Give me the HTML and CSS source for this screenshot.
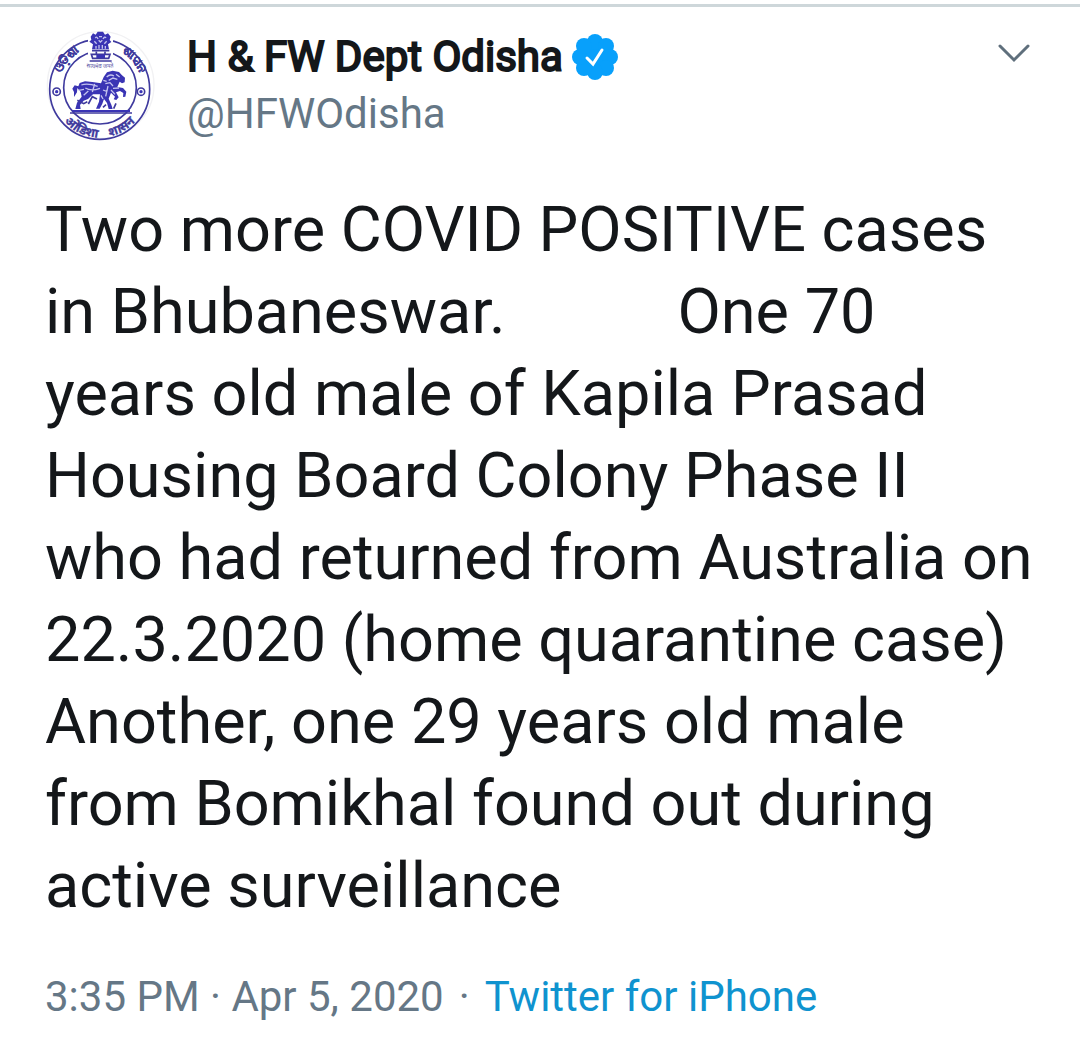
FILE: index.html
```html
<!DOCTYPE html>
<html lang="en">
<head>
  <meta charset="UTF-8">
  <meta name="viewport" content="width=device-width, initial-scale=1">
  <title>H &amp; FW Dept Odisha</title>
  <link rel="stylesheet" href="styles.css">
</head>
<body>
  <article class="tweet">

    <!-- Header -->
    <header class="tweet-header">
      <svg class="avatar" viewBox="16 36 324 324" role="img" aria-label="Seal of Odisha">
        <defs>
          <path id="arc-left" d="M54 203 A126 126 0 0 1 160 86" />
          <path id="arc-right" d="M206 86 A128 128 0 0 1 309 205" />
          <path id="arc-bottom" d="M38 232 A144 144 0 0 0 323 232" />
          <path id="arc-motto" d="M116 139 Q181 157 246 139" />
        </defs>
        <circle class="avatar-edge" cx="183" cy="198" r="160" />
        <circle class="seal-ring" cx="180" cy="211" r="150" />
        <circle class="seal-ring" cx="181" cy="206" r="109" />

        <!-- Lion capital -->
        <path class="seal-gap" d="M145 48H220V134H145Z" />
        <path class="seal-fill" d="M153 53L160 43L168 47L174 38L190 38L196 47L205 43L213 53L210 63L215 69L205 76L208 91H157L160 76L149 68L155 62Z" />
        <path class="seal-line" d="M157 95H209M155 106H211L207 118H159ZM150 126H216M170 98V104M196 98V104" />
        <path class="seal-fill" d="M170 107H196V117H170Z" />
        <path class="seal-light" d="M167 57Q172 51 175 60M190 60Q195 51 199 57M164 67L171 74M201 67L194 74M178 53H187M177 64L182 69L188 64M169 81V89M178 78V89M188 78V89M197 81V89" />

        <!-- Rosettes -->
        <circle class="seal-line" cx="51" cy="218" r="11" />
        <circle class="seal-fill" cx="51" cy="218" r="5" />
        <circle class="seal-line" cx="304" cy="218" r="11" />
        <circle class="seal-fill" cx="304" cy="218" r="5" />

        <!-- Horse and warrior -->
        <path class="seal-fill" d="M103 219L98 209L105 199L116 202L120 192L136 187L158 189L184 193L192 174L202 160L219 155L238 159L247 169L256 176L255 190L247 193L240 188L233 204L250 207L260 218L257 233L250 234L251 222L241 216L229 220L237 235L230 243L222 241L226 233L214 221L207 239L215 257L219 270H207L202 252L193 240L188 254L180 269H169L178 248L181 226L160 226L145 240L132 245L121 258L123 270H107L112 251L126 233L123 219L113 207L112 220L103 234Z" />
        <path class="seal-light" d="M125 198Q143 191 174 202M137 207Q154 218 181 208M132 229L146 216M201 174Q211 164 223 171M207 184L220 177L233 181M197 194L211 191L220 201M190 213L203 218M205 201L198 232M184 229L190 240M229 166L240 174M220 208L238 207M165 195L158 219M117 214L133 211M191 184L201 187M214 213L226 226" />
        <path class="seal-line" d="M113 244L132 254L143 248M146 255L158 233L172 240M190 265L199 257M229 253L222 269" />
        <path class="seal-bar" d="M97 276H271" />
        <path class="seal-line" d="M91 282H277" />

        <!-- Lettering round the ring -->
        <text class="seal-text" lang="or"><textPath href="#arc-left" startOffset="50%">ଓଡ଼ିଶା</textPath></text>
        <text class="seal-text" lang="or"><textPath href="#arc-right" startOffset="50%">ଶାସନ</textPath></text>
        <text class="seal-text" lang="hi"><textPath href="#arc-bottom" startOffset="50%">ओडिशा&#160;&#160;&#160; शासन</textPath></text>
        <text class="seal-motto" lang="hi"><textPath href="#arc-motto" startOffset="50%">सत्यमेव जयते</textPath></text>
      </svg>

      <div class="author">
        <div class="author-name">
          <strong>H &amp; FW Dept Odisha</strong>
          <svg class="badge" viewBox="0 0 46 46" role="img" aria-label="Verified account">
            <g class="badge-shape">
              <circle cx="23" cy="23" r="18" />
              <circle cx="23" cy="8" r="8" />
              <circle cx="34" cy="12" r="8" />
              <circle cx="38" cy="23" r="8" />
              <circle cx="34" cy="34" r="8" />
              <circle cx="23" cy="38" r="8" />
              <circle cx="12" cy="34" r="8" />
              <circle cx="8" cy="23" r="8" />
              <circle cx="12" cy="12" r="8" />
            </g>
            <path class="badge-check" d="M15 24L21 30L30 16" />
          </svg>
        </div>
        <a class="author-handle" href="#">@HFWOdisha</a>
      </div>

      <button class="menu-button" type="button" aria-label="More options">
        <svg class="chevron" viewBox="0 0 32 20">
          <path d="M2 3L16 17L30 3" />
        </svg>
      </button>
    </header>

    <!-- Tweet text -->
    <p class="tweet-text">Two more COVID POSITIVE cases in Bhubaneswar. &#160; &#160; &#160; &#160; &#160; One 70 years old male of Kapila Prasad Housing Board Colony Phase II who had returned from Australia on 22.3.2020 (home quarantine case) Another, one 29 years old male from Bomikhal found out during active surveillance</p>

    <!-- Date and source -->
    <footer class="tweet-meta">
      <time datetime="2020-04-05T15:35">3:35 PM · Apr 5, 2020</time>
      <span class="dot">·</span>
      <a class="source" href="#">Twitter for iPhone</a>
    </footer>

  </article>
</body>
</html>
```
FILE: styles.css
```css
* {
  box-sizing: border-box;
  margin: 0;
  padding: 0;
}
body {
  background: #fff;
  color: #14171a;
  font-family: Roboto, "Noto Sans", sans-serif;
  padding-top: 4px;
}
a {
  text-decoration: none;
}

/* ---------- TWEET ---------- */
.tweet {
  border-top: 3px solid #ced7da;
  padding: 24px 46px 32px 45px;
}

/* ---------- HEADER ---------- */
.tweet-header {
  display: flex;
  align-items: flex-start;
}
.avatar {
  width: 108px;
  height: 108px;
  flex: none;
  overflow: visible;
}
.author {
  flex: 1;
  margin-left: 34px;
}
.author-name {
  display: flex;
  align-items: center;
  gap: 9px;
  font-size: 42px;
  line-height: 52px;
}
/* regular weight thickened with a stroke, narrower than the real bold */
.author-name strong {
  font-weight: 400;
  -webkit-text-stroke: 2px #14171a;
}
.author-handle {
  display: block;
  color: #657786;
  font-size: 42px;
  line-height: 62px;
}
.menu-button {
  background: none;
  border: none;
  cursor: pointer;
  padding: 12px 4px;
}

/* ---------- TEXT ---------- */
.tweet-text {
  font-size: 63px;
  line-height: 82px;
  margin-top: 44px;
}

/* ---------- META ---------- */
.tweet-meta {
  color: #657786;
  display: flex;
  gap: 15px;
  font-size: 42px;
  line-height: 56px;
  margin-top: 42px;
}
.source {
  color: #0f93cf;
}

/* ---------- ICONS ---------- */
.badge {
  width: 46px;
  height: 46px;
  flex: none;
}
.badge-shape {
  fill: #08a0fb;
}
.badge-check {
  fill: none;
  stroke: #fff;
  stroke-width: 3;
  stroke-linecap: round;
}
.chevron {
  display: block;
  width: 32px;
  height: 20px;
  fill: none;
  stroke: #5f6f7c;
  stroke-width: 3;
  stroke-linecap: round;
}

/* ---------- SEAL ---------- */
.avatar-edge {
  fill: #fff;
  stroke: #f1f1f3;
  stroke-width: 4;
}
.seal-ring,
.seal-line {
  fill: none;
  stroke: #3f3a9e;
  stroke-width: 5;
}
.seal-gap {
  fill: #fff;
}
.seal-fill {
  fill: #3a34b4;
}
.seal-light {
  fill: none;
  stroke: #c3c2ee;
  stroke-width: 4;
}
.seal-bar {
  stroke: #3a34b4;
  stroke-width: 6;
}
.seal-text {
  fill: #3f3a9e;
  stroke: #3f3a9e;
  stroke-width: 1;
  font-size: 37px;
  font-weight: 700;
  text-anchor: middle;
}
.seal-motto {
  fill: #55519f;
  font-size: 17px;
  text-anchor: middle;
}
```
